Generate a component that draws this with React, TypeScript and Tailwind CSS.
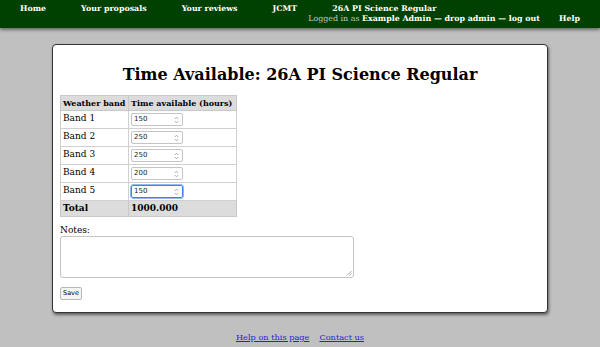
import React from 'react';

const bands = [
  { name: 'Band 1', value: '150' },
  { name: 'Band 2', value: '250' },
  { name: 'Band 3', value: '250' },
  { name: 'Band 4', value: '200' },
  { name: 'Band 5', value: '150', focused: true },
];

const Spinner = () => (
  <svg width="5" height="8" viewBox="0 0 5 8" className="shrink-0">
    <path d="M0.8 3 L2.5 1.2 L4.2 3" fill="none" stroke="#9a9a9a" strokeWidth="0.8" />
    <path d="M0.8 5 L2.5 6.8 L4.2 5" fill="none" stroke="#9a9a9a" strokeWidth="0.8" />
  </svg>
);

const NumberBox = ({ value, focused }: { value: string; focused?: boolean }) => (
  <div
    className={
      focused
        ? 'flex h-[13px] w-[52px] items-center justify-between rounded-[2px] border border-[#3b82f6] bg-white pl-[2px] pr-[3px] text-[7px] leading-none text-[#222] outline outline-1 outline-[#93b8ee]'
        : 'flex h-[13px] w-[52px] items-center justify-between rounded-[2px] border border-[#c4c4c4] bg-white pl-[2px] pr-[3px] text-[7px] leading-none text-[#222]'
    }
    style={{ fontFamily: '"DejaVu Sans", sans-serif' }}
  >
    <span>{value}</span>
    <Spinner />
  </div>
);

const App = () => {
  return (
    <div
      className="min-h-screen bg-[#c0c0c0] text-black"
      style={{ fontFamily: '"DejaVu Serif", serif' }}
    >
      {/* Header */}
      <div className="flex h-[28px] flex-col whitespace-nowrap bg-[#004000] pt-[4px] text-[7.9px] font-bold leading-[10px] text-white shadow-[0_2px_3px_rgba(0,0,0,0.45)]">
        <div className="flex gap-[35px] pl-[20px]">
          <span>Home</span>
          <span>Your proposals</span>
          <span>Your reviews</span>
          <span>JCMT</span>
          <span>26A PI Science Regular</span>
        </div>
        <div className="flex justify-end gap-[19px] pr-[20px]">
          <span>
            <span className="font-normal text-[#c8c8c8]">Logged in as </span>
            Example Admin — drop admin — log out
          </span>
          <span>Help</span>
        </div>
      </div>

      {/* Card */}
      <div className="mx-[52px] mt-[16px] rounded-[4px] border border-[#333] bg-white px-[7px] pb-[10px] pt-[20px] shadow-[1px_2px_3px_rgba(0,0,0,0.5)]">
        <h1 className="text-center text-[16px] font-bold leading-[20px]">
          Time Available: 26A PI Science Regular
        </h1>

        <table className="mt-[10px] w-[176px] table-fixed border-collapse whitespace-nowrap text-[8px] leading-[11px]">
          <thead>
            <tr className="bg-[#dcdcdc]">
              <th className="h-[15px] w-[68px] border border-[#c8c8c8] px-[2px] text-left font-bold">
                Weather band
              </th>
              <th className="h-[15px] w-[108px] border border-[#c8c8c8] px-[2px] text-left font-bold">
                Time available (hours)
              </th>
            </tr>
          </thead>
          <tbody>
            {bands.map((b) => (
              <tr key={b.name}>
                <td className="h-[18px] border border-[#d0d0d0] px-[2px] pt-[2px] align-top text-[9px]">{b.name}</td>
                <td className="h-[18px] border border-[#d0d0d0] px-[2px]">
                  <NumberBox value={b.value} focused={b.focused} />
                </td>
              </tr>
            ))}
            <tr className="bg-[#dcdcdc]">
              <td className="h-[16px] border border-[#c8c8c8] px-[2px] text-[9px] font-bold">Total</td>
              <td className="h-[16px] border border-[#c8c8c8] px-[2px] text-[9px] font-bold">1000.000</td>
            </tr>
          </tbody>
        </table>

        <div className="mt-[8px] text-[9px] leading-[11px]">Notes:</div>
        <div className="relative h-[42px] w-[294px] rounded-[3px] border border-[#c4c4c4] bg-white">
          <svg width="6" height="6" viewBox="0 0 6 6" className="absolute bottom-[1px] right-[1px]">
            <path d="M5.5 1 L1 5.5 M5.5 3.5 L3.5 5.5" stroke="#999" strokeWidth="0.8" />
          </svg>
        </div>
        <button
          className="mt-[7px] h-[13px] rounded-[2px] border border-[#b8b8b8] bg-[#f4f4f4] px-[2px] text-[6.5px] leading-none"
          style={{ fontFamily: '"DejaVu Sans", sans-serif' }}
        >
          Save
        </button>
      </div>

      {/* Footer */}
      <div className="flex justify-center gap-[10px] pt-[19px] text-[8.2px] leading-[11px] text-[#2323d8]">
        <a className="underline">Help on this page</a>
        <a className="underline">Contact us</a>
      </div>
    </div>
  );
};

export default App;
